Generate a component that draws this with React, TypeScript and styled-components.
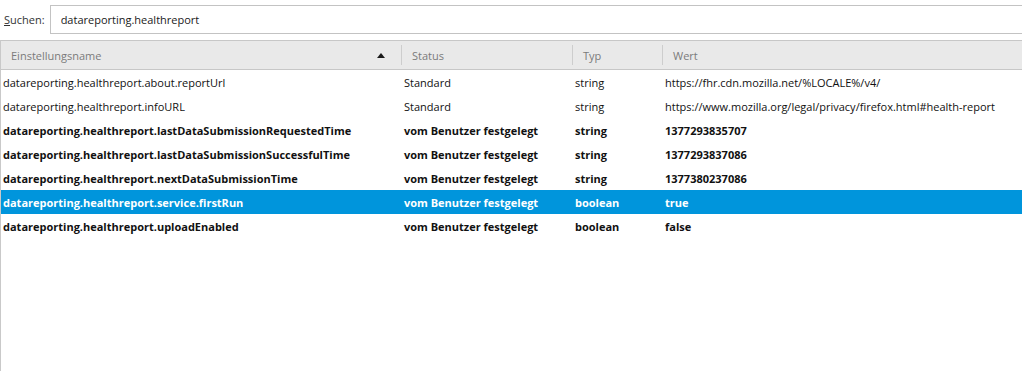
import React from 'react';
import styled, { createGlobalStyle } from 'styled-components';

const GlobalStyle = createGlobalStyle`
  html, body {
    margin: 0;
    padding: 0;
    background: #ffffff;
  }
  body {
    font-family: "Open Sans", "Noto Sans", "Liberation Sans", sans-serif;
    font-size: 11px;
    color: #1a1a1a;
  }
`;

const Page = styled.div`
  width: 1022px;
  height: 371px;
  overflow: hidden;
  display: flex;
  flex-direction: column;
`;

const SearchBar = styled.div`
  display: flex;
  align-items: center;
  height: 30px;
  padding: 4px 0 0 4px;
  gap: 5px;
`;

const SearchLabel = styled.label`
  color: #333;
  font-size: 11px;
  span {
    text-decoration: underline;
  }
`;

const SearchInput = styled.input`
  flex: 1;
  height: 29px;
  box-sizing: border-box;
  border: 1px solid #c3c3c3;
  border-right: none;
  padding: 0 10px;
  font: inherit;
  font-size: 11px;
  color: #1a1a1a;
  outline: none;
`;

const Table = styled.div`
  margin-top: 6px;
  flex: 1;
  display: flex;
  flex-direction: column;
  border-left: 1px solid #c9c9c9;
`;

const Cols = '401px 171px 90px 1fr';

const HeaderRow = styled.div`
  display: grid;
  grid-template-columns: ${Cols};
  height: 28px;
  background: #e9e9e9;
  border-top: 1px solid #c7c7c7;
  border-bottom: 1px solid #c7c7c7;
`;

const HeaderCell = styled.div<{ $last?: boolean }>`
  display: flex;
  align-items: center;
  padding: 0 10px;
  color: #7b7b7b;
  border-right: ${(p) => (p.$last ? 'none' : '1px solid #cdcdcd')};
  margin: 4px 0;
  justify-content: space-between;
`;

const SortArrow = styled.span`
  width: 0;
  height: 0;
  border-left: 4px solid transparent;
  border-right: 4px solid transparent;
  border-bottom: 5px solid #1a1a1a;
  margin-right: 6px;
`;

const Row = styled.div<{ $selected?: boolean; $bold?: boolean }>`
  display: grid;
  grid-template-columns: ${Cols};
  height: 24px;
  align-items: center;
  background: ${(p) => (p.$selected ? '#0095dc' : 'transparent')};
  color: ${(p) => (p.$selected ? '#ffffff' : '#111111')};
  font-weight: ${(p) => (p.$bold ? 700 : 400)};
`;

const Cell = styled.div`
  padding-left: 2px;
  white-space: nowrap;
  overflow: hidden;
`;

const rows = [
  { name: 'datareporting.healthreport.about.reportUrl', status: 'Standard', type: 'string', value: 'https://fhr.cdn.mozilla.net/%LOCALE%/v4/', bold: false },
  { name: 'datareporting.healthreport.infoURL', status: 'Standard', type: 'string', value: 'https://www.mozilla.org/legal/privacy/firefox.html#health-report', bold: false },
  { name: 'datareporting.healthreport.lastDataSubmissionRequestedTime', status: 'vom Benutzer festgelegt', type: 'string', value: '1377293835707', bold: true },
  { name: 'datareporting.healthreport.lastDataSubmissionSuccessfulTime', status: 'vom Benutzer festgelegt', type: 'string', value: '1377293837086', bold: true },
  { name: 'datareporting.healthreport.nextDataSubmissionTime', status: 'vom Benutzer festgelegt', type: 'string', value: '1377380237086', bold: true },
  { name: 'datareporting.healthreport.service.firstRun', status: 'vom Benutzer festgelegt', type: 'boolean', value: 'true', bold: true, selected: true },
  { name: 'datareporting.healthreport.uploadEnabled', status: 'vom Benutzer festgelegt', type: 'boolean', value: 'false', bold: true },
];

export default function App() {
  return (
    <Page>
      <GlobalStyle />
      <SearchBar>
        <SearchLabel>
          <span>S</span>uchen:
        </SearchLabel>
        <SearchInput defaultValue="datareporting.healthreport" />
      </SearchBar>
      <Table>
        <HeaderRow>
          <HeaderCell>
            Einstellungsname
            <SortArrow />
          </HeaderCell>
          <HeaderCell>Status</HeaderCell>
          <HeaderCell>Typ</HeaderCell>
          <HeaderCell $last>Wert</HeaderCell>
        </HeaderRow>
        {rows.map((r) => (
          <Row key={r.name} $bold={r.bold} $selected={r.selected}>
            <Cell>{r.name}</Cell>
            <Cell>{r.status}</Cell>
            <Cell>{r.type}</Cell>
            <Cell>{r.value}</Cell>
          </Row>
        ))}
      </Table>
    </Page>
  );
}
